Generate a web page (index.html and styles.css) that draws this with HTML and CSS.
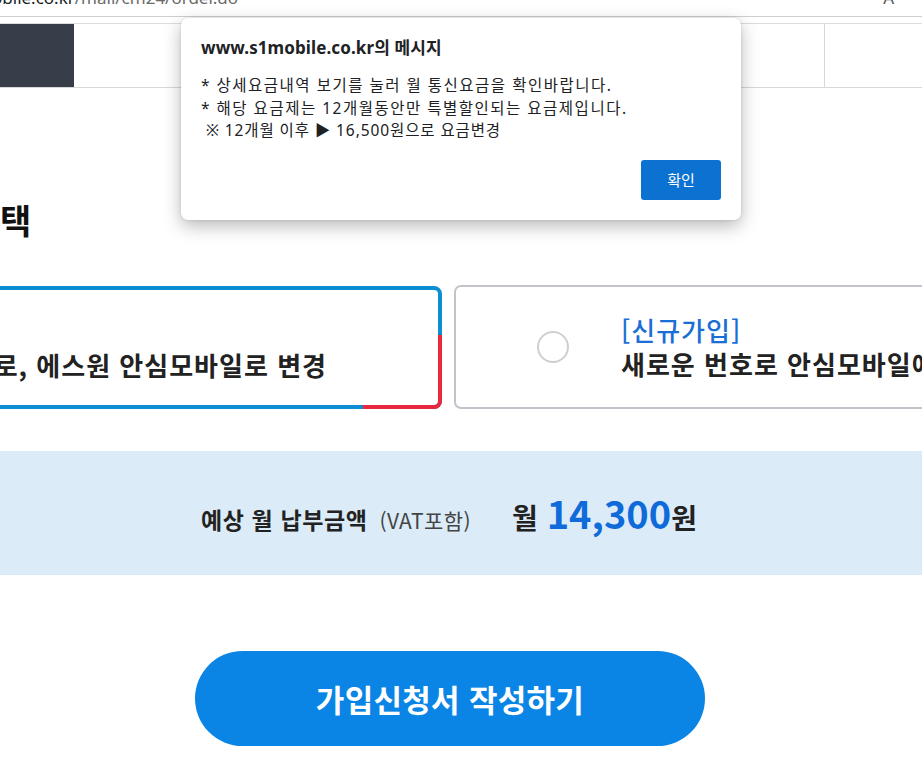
FILE: index.html
```html
<!DOCTYPE html>
<html lang="ko">
<head>
<meta charset="utf-8">
<title>order</title>
<link rel="stylesheet" href="styles.css">
</head>
<body>
<div class="addr">
  <span class="url"><span class="host">obile.co.kr</span><span class="path">/mall/cm24/order.do</span></span>
  <span class="reader">A</span>
</div>
<div class="gapbar"></div>
<nav class="nav">
  <div class="nav-dark"></div>
  <div class="nav-mid"></div>
  <div class="nav-last"></div>
</nav>
<main class="page">
  <h2 class="title">택</h2>
  <div class="cards">
    <div class="card card-on">
      <div class="card-text">
        <span class="label">[번호이동]</span>
        <span class="desc">기존 번호 그대로, 에스원 안심모바일로 변경</span>
      </div>
    </div>
    <div class="card card-off">
      <span class="radio"></span>
      <div class="card-text">
        <span class="label">[신규가입]</span>
        <span class="desc">새로운 번호로 안심모바일에 가입</span>
      </div>
    </div>
  </div>
  <section class="price">
    <span class="p-label">예상 월 납부금액</span>
    <span class="p-vat">(VAT포함)</span>
    <span class="p-month">월</span>
    <span class="p-num">14,300</span>
    <span class="p-won">원</span>
  </section>
  <div class="btn-wrap">
    <button class="apply">가입신청서 작성하기</button>
  </div>
</main>
<div class="dialog">
  <div class="d-title">www.s1mobile.co.kr의 메시지</div>
  <div class="d-body">
    <p>* 상세요금내역 보기를 눌러 월 통신요금을 확인바랍니다.</p>
    <p>* 해당 요금제는 12개월동안만 특별할인되는 요금제입니다.</p>
    <p>&nbsp;※ 12개월 이후 ▶ 16,500원으로 요금변경</p>
  </div>
  <div class="d-actions"><button class="d-ok">확인</button></div>
</div>
</body>
</html>
```
FILE: styles.css
```css
html, body {
  margin: 0;
  padding: 0;
  background: #fff;
  overflow: hidden;
  width: 922px;
  height: 770px;
}
body {
  font-family: "Noto Sans CJK KR", "Noto Sans", sans-serif;
  color: #222;
  position: relative;
}
.addr {
  height: 16px;
  border-bottom: 1px solid #cfcfcf;
  overflow: hidden;
  display: flex;
  justify-content: space-between;
  font-family: "Noto Sans", "Noto Sans CJK KR", sans-serif;
  font-size: 17px;
  line-height: 22px;
}
.url {
  margin-top: -13px;
  margin-left: -8px;
  white-space: nowrap;
}
.host { color: #202124; }
.path { color: #6b6b6b; }
.reader {
  margin-top: -13px;
  margin-right: 28px;
  color: #555;
  font-size: 17px;
}
.gapbar { height: 6px; }
.nav {
  display: flex;
  height: 63px;
  border-top: 1px solid #dcdcdc;
  border-bottom: 1px solid #d8d8d8;
}
.nav-dark { width: 74px; background: #383d4a; }
.nav-mid { flex: 1; }
.nav-last { width: 97px; border-left: 1px solid #d6d6d6; }

.page {
  margin-left: -22px;
  width: 944px;
}
.title {
  margin: 109px 0 0 22px;
  font-size: 34px;
  line-height: 46px;
  font-weight: 700;
  color: #111;
}
.cards {
  display: flex;
  gap: 12px;
  margin-top: 42px;
  align-items: flex-start;
}
.card {
  box-sizing: border-box;
  border-radius: 8px;
  display: flex;
  align-items: center;
  position: relative;
  flex-shrink: 0;
}
.card-on {
  width: 484px;
  margin-left: -20px;
  height: 123px;
  border: 4px solid #0b8fd2;
  justify-content: flex-end;
  padding-right: 111px;
  margin-top: 1px;
}
.card-on::after {
  content: "";
  position: absolute;
  right: -4px;
  bottom: -4px;
  width: 75px;
  height: 70px;
  border-right: 4px solid #e8283c;
  border-bottom: 4px solid #e8283c;
  border-bottom-right-radius: 8px;
}
.card-off {
  width: 520px;
  height: 124px;
  border: 2px solid #c3c3cb;
  border-radius: 7px;
  padding-left: 81px;
  gap: 52px;
}
.card-text {
  display: flex;
  flex-direction: column;
  white-space: nowrap;
}
.label {
  color: #1a6fd6;
  font-size: 26px;
  line-height: 34px;
  font-weight: 500;
  letter-spacing: 1px;
}
.desc {
  color: #222;
  font-size: 26px;
  line-height: 34px;
  font-weight: 700;
  letter-spacing: 1px;
}
.radio {
  width: 28px;
  height: 28px;
  border: 2px solid #cfcfcf;
  border-radius: 50%;
  flex-shrink: 0;
}
.price {
  margin-top: 42px;
  height: 124px;
  background: #dbebf8;
  display: flex;
  align-items: baseline;
  justify-content: center;
  box-sizing: border-box;
  line-height: 124px;
  padding-right: 2px;
}
.p-label {
  font-size: 23px;
  font-weight: 700;
  color: #222;
  letter-spacing: 0.6px;
}
.p-vat {
  font-size: 21px;
  color: #444;
  margin-left: 12px;
  letter-spacing: 0.4px;
}
.p-month {
  font-size: 28px;
  font-weight: 700;
  color: #222;
  margin-left: 41px;
}
.p-num {
  font-size: 38px;
  font-weight: 700;
  color: #0f6bd9;
  margin-left: 9px;
}
.p-won {
  font-size: 28px;
  font-weight: 700;
  color: #222;
}
.btn-wrap {
  display: flex;
  justify-content: center;
  margin-top: 76px;
}
.apply {
  width: 510px;
  height: 95px;
  border: none;
  border-radius: 48px;
  background: #0a85e6;
  color: #fff;
  font-family: "Noto Sans CJK KR", sans-serif;
  font-size: 31px;
  font-weight: 700;
  letter-spacing: 0.3px;
}

.dialog {
  position: absolute;
  left: 181px;
  top: 18px;
  width: 560px;
  height: 202px;
  box-sizing: border-box;
  background: #fff;
  border-radius: 7px;
  box-shadow: 0 6px 18px rgba(0,0,0,0.28), 0 0 3px rgba(0,0,0,0.12);
  padding: 18px 20px 20px 20px;
  font-family: "Noto Sans", "Noto Sans CJK KR", sans-serif;
  color: #202124;
}
.d-title {
  font-size: 17px;
  font-weight: 700;
  line-height: 24px;
  letter-spacing: 0.1px;
}
.d-body {
  margin-top: 14px;
  font-size: 15.5px;
  line-height: 22.5px;
  letter-spacing: 1.5px;
  white-space: nowrap;
}
.d-body p { margin: 0; }
.d-body p:last-child { letter-spacing: 0.9px; }
.d-actions {
  display: flex;
  justify-content: flex-end;
  margin-top: 18px;
}
.d-ok {
  width: 80px;
  height: 40px;
  border: none;
  border-radius: 3px;
  background: #0b72d1;
  color: #fff;
  font-family: "Noto Sans CJK KR", sans-serif;
  font-size: 15px;
}
```
